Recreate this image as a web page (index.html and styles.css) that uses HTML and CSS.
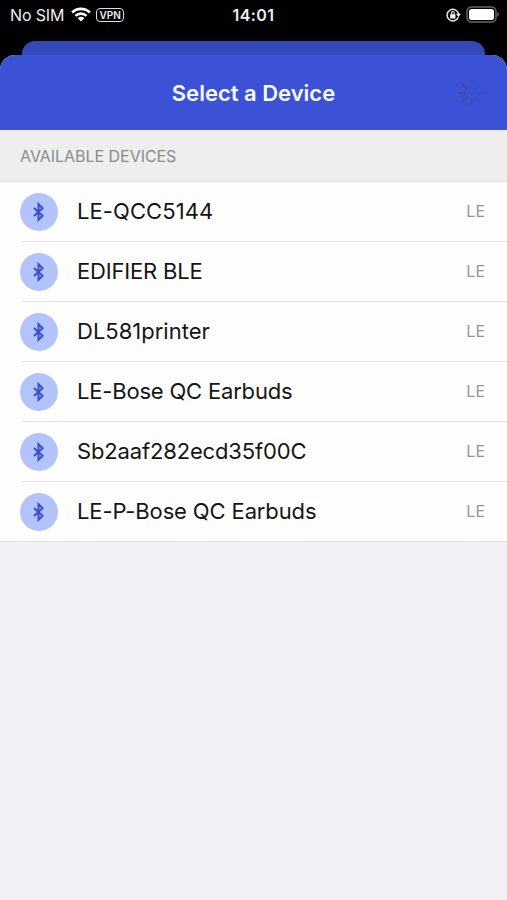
FILE: index.html
```
<!DOCTYPE html>
<html lang="en">
<head>
<meta charset="utf-8">
<title>Select a Device</title>
<link rel="stylesheet" href="styles.css">
</head>
<body>
<svg class="defs" aria-hidden="true">
  <symbol id="bt" viewBox="0 0 12 22"><path d="M1 6.9 9.6 14.8 5.5 18.9V3.1L9.6 7.2 1 15.1"/></symbol>
</svg>
<div class="screen">
  <header class="status">
    <div class="status-left">
      <span class="carrier">No SIM</span>
      <svg class="wifi" viewBox="0 0 20 15"><path d="M1.2 5.5a12.4 12.4 0 0 1 17.6 0M4.5 8.9a7.8 7.8 0 0 1 11 0"/><path class="solid" d="M6.7 11.2a4.7 4.7 0 0 1 6.6 0L10 14.5z"/></svg>
      <span class="vpn">VPN</span>
    </div>
    <span class="clock">14:01</span>
    <div class="status-right">
      <svg class="lock" viewBox="0 0 15 14"><path d="M12.3 9.2a5.8 5.8 0 1 1 .3-3.2"/><path class="solid" d="M10 5.8h4.8l-2.3 3.2zM4.2 6.2h5.2v4.2H4.2z"/><path class="shackle" d="M5.4 6.6V5a1.4 1.4 0 0 1 2.8 0v1.6"/></svg>
      <svg class="battery" viewBox="0 0 34 17"><rect class="shell" x="1" y="1" width="29" height="15" rx="4.5"/><rect class="charge" x="3" y="3" width="25" height="11" rx="2.5"/><path class="tip" d="M31.3 6q1.7.6 1.7 2.5t-1.7 2.5z"/></svg>
    </div>
  </header>
  <div class="back-card"></div>
  <main class="sheet">
    <div class="nav">
      <h1>Select a Device</h1>
      <svg class="spinner" viewBox="-14 -14 28 28">
        <path d="M0-6.3V-11.7" opacity=".3"/>
        <path d="M0-6.3V-11.7" opacity=".15" transform="rotate(45)"/>
        <path d="M0-6.3V-11.7" opacity=".25" transform="rotate(90)"/>
        <path d="M0-6.3V-11.7" opacity=".2" transform="rotate(135)"/>
        <path d="M0-6.3V-11.7" opacity=".4" transform="rotate(180)"/>
        <path d="M0-6.3V-11.7" opacity=".5" transform="rotate(225)"/>
        <path d="M0-6.3V-11.7" opacity=".7" transform="rotate(270)"/>
        <path d="M0-6.3V-11.7" opacity=".9" transform="rotate(315)"/>
      </svg>
    </div>
    <h2>AVAILABLE DEVICES</h2>
    <ul class="devices">
      <li><span class="icon"><svg><use href="#bt"/></svg></span><span class="row"><span class="name n1">LE-QCC5144</span><span class="kind">LE</span></span></li>
      <li><span class="icon"><svg><use href="#bt"/></svg></span><span class="row"><span class="name n2">EDIFIER BLE</span><span class="kind">LE</span></span></li>
      <li><span class="icon"><svg><use href="#bt"/></svg></span><span class="row"><span class="name n3">DL581printer</span><span class="kind">LE</span></span></li>
      <li><span class="icon"><svg><use href="#bt"/></svg></span><span class="row"><span class="name n4">LE-Bose QC Earbuds</span><span class="kind">LE</span></span></li>
      <li><span class="icon"><svg><use href="#bt"/></svg></span><span class="row"><span class="name n5">Sb2aaf282ecd35f00C</span><span class="kind">LE</span></span></li>
      <li><span class="icon"><svg><use href="#bt"/></svg></span><span class="row"><span class="name n6">LE-P-Bose QC Earbuds</span><span class="kind">LE</span></span></li>
    </ul>
  </main>
</div>
</body>
</html>
```
FILE: styles.css
```
* { box-sizing: border-box; }
body { margin: 0; background: #000; font-family: Inter, "Liberation Sans", sans-serif; }
.defs { display: none; }
.screen { width: 507px; height: 900px; display: flex; flex-direction: column; overflow: hidden; }

.status {
  height: 41px; padding: 0 8px 12px 10px; flex: none;
  display: grid; grid-template-columns: 1fr auto 1fr; align-items: center;
  color: #eee;
}
.status-left, .status-right { display: flex; align-items: center; }
.status-right { justify-content: flex-end; gap: 5px; }
.carrier { font-size: 16px; letter-spacing: -0.15px; }
.wifi { width: 20px; height: 15px; margin-left: 6.5px; fill: none; stroke: #fff; stroke-width: 2.6; }
.solid { fill: #fff; stroke: none; }
.vpn {
  width: 28px; height: 14px; margin-left: 5.5px; border: 1.5px solid #ddd; border-radius: 4px;
  font-size: 10px; font-weight: 600; line-height: 12px; text-align: center;
}
.clock { font-size: 16px; font-weight: 600; letter-spacing: 0.4px; margin-right: 2px; }
.lock { width: 15px; height: 14px; fill: none; stroke: #e6e6e6; stroke-width: 1.5; }
.shackle { stroke-width: 1.1; }
.battery { width: 34px; height: 17px; margin-right: -1px; }
.shell { fill: none; stroke: #666; stroke-width: 1.5; }
.charge { fill: #fff; }
.tip { fill: #666; }

.back-card { flex: none; height: 28px; margin: 0 22px -14px; border-radius: 13px 13px 0 0; background: #3249b8; }
.sheet { position: relative; flex: 1; border-radius: 15px 15px 0 0; overflow: hidden; background: #f0f0f5; }
.nav { height: 75px; display: grid; grid-template-columns: 1fr auto 1fr; align-items: center; background: #3b52d6; color: #f7f8ff; }
h1 { grid-column: 2; margin: 0; font-size: 22px; font-weight: 600; letter-spacing: 0; line-height: 28px; }
.spinner { justify-self: end; width: 28px; height: 28px; margin-right: 22px; stroke: #404a80; stroke-width: 2.2; stroke-linecap: round; }
h2 {
  height: 52px; margin: 0; padding: 0 20px; background: #eee; border-bottom: 1px solid #dedee0;
  font-size: 16px; font-weight: 400; line-height: 52px; letter-spacing: -0.04px; color: #8b8b8d;
}
.devices { margin: 0; padding: 0; list-style: none; }
li { height: 60px; display: flex; align-items: center; padding-left: 20px; background: linear-gradient(#e2e2e4, #e2e2e4) 22px 100% / 100% 1px no-repeat #fefefe; }
li:last-child { background-position: 0 100%; }
.icon { width: 38px; height: 38px; border-radius: 50%; background: #b3c4fa; display: flex; align-items: center; justify-content: center; }
.icon svg { width: 12px; height: 22px; margin-right: 1px; fill: none; stroke: #3850d0; stroke-width: 2; stroke-linejoin: miter; }
.row { flex: 1; display: flex; align-items: center; justify-content: space-between; padding: 0 22px 2px 19px; }
.name { font-size: 22px; color: #151515; white-space: nowrap; }
.kind { font-size: 16px; color: #969698; }
.n1 { letter-spacing: 0.08px; }
.n2 { letter-spacing: -0.17px; }
.n4 { letter-spacing: -0.19px; }
.n5 { letter-spacing: -0.15px; }
.n6 { letter-spacing: -0.13px; }
```
